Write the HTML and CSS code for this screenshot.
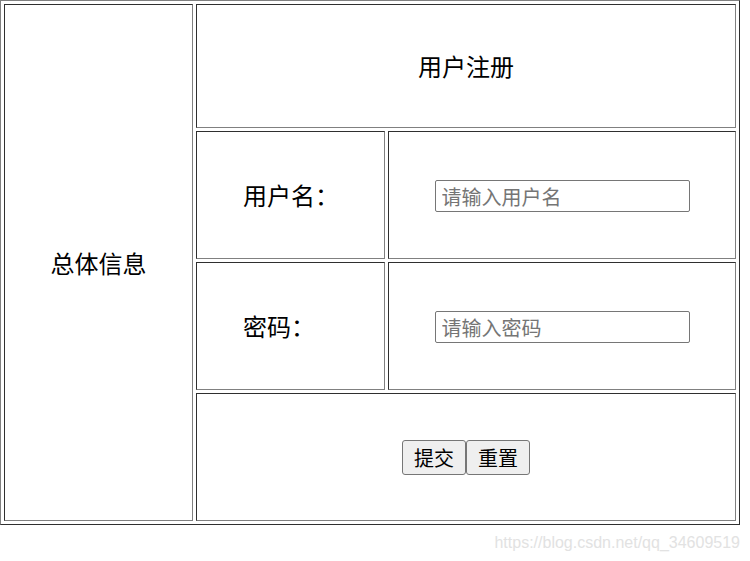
FILE: index.html
```html
<!DOCTYPE html>
<html lang="zh">
<head>
<meta charset="utf-8">
<title>用户注册</title>
<link rel="stylesheet" href="styles.css">
</head>
<body>
<table class="reg">
  <colgroup>
    <col class="c1"><col class="c2"><col class="c3">
  </colgroup>
  <tr class="r1">
    <td rowspan="4" class="side">总体信息</td>
    <td colspan="2" class="title">用户注册</td>
  </tr>
  <tr class="r2">
    <td class="label">用户名：</td>
    <td class="field"><input type="text" class="inp" placeholder="请输入用户名"></td>
  </tr>
  <tr class="r3">
    <td class="label">密码：</td>
    <td class="field"><input type="password" class="inp" placeholder="请输入密码"></td>
  </tr>
  <tr class="r4">
    <td colspan="2" class="actions"><button class="btn">提交</button><button class="btn">重置</button></td>
  </tr>
</table>
<div class="mark">https://blog.csdn.net/qq_34609519</div>
</body>
</html>
```

FILE: styles.css
```css
html, body {
  margin: 0;
  padding: 0;
  background: #fff;
}
body {
  font-family: "Noto Sans CJK SC", "Liberation Sans", sans-serif;
  color: #000;
}
.reg {
  table-layout: fixed;
  width: 740px;
  border-collapse: separate;
  border-spacing: 3px;
  border: 1px solid;
  border-color: #808080 #2f2f2f #2f2f2f #808080;
}
.c1, .c2 { width: 189px; }
.c3 { width: 348px; }
.reg td {
  box-sizing: border-box;
  border: 1px solid;
  border-color: #2f2f2f #808080 #808080 #2f2f2f;
  padding: 0;
  font-size: 24px;
  line-height: 30px;
  text-align: center;
  vertical-align: middle;
}
.r1 td.title { height: 124px; }
.r2 td, .r3 td, .r4 td { height: 128px; }
.reg td.label {
  text-align: left;
  padding-left: 46px;
}
.inp {
  box-sizing: border-box;
  width: 255px;
  height: 32px;
  margin: 0;
  padding: 1px 6px;
  border: 1px solid #767676;
  border-radius: 2px;
  font-family: "Noto Sans CJK SC", "Liberation Sans", sans-serif;
  font-size: 20px;
  vertical-align: middle;
}
.inp::placeholder { color: #757575; }
.btn {
  box-sizing: border-box;
  width: 64px;
  height: 35px;
  margin: 0;
  padding: 0;
  border: 1px solid #767676;
  border-radius: 3px;
  background: #efefef;
  font-family: "Noto Sans CJK SC", "Liberation Sans", sans-serif;
  font-size: 20px;
  line-height: 33px;
  color: #000;
  vertical-align: middle;
}
.mark {
  margin-top: 9px;
  padding-right: 10px;
  text-align: right;
  font-family: "Liberation Sans", Arial, sans-serif;
  font-size: 16px;
  color: #e2e2e2;
}
```
